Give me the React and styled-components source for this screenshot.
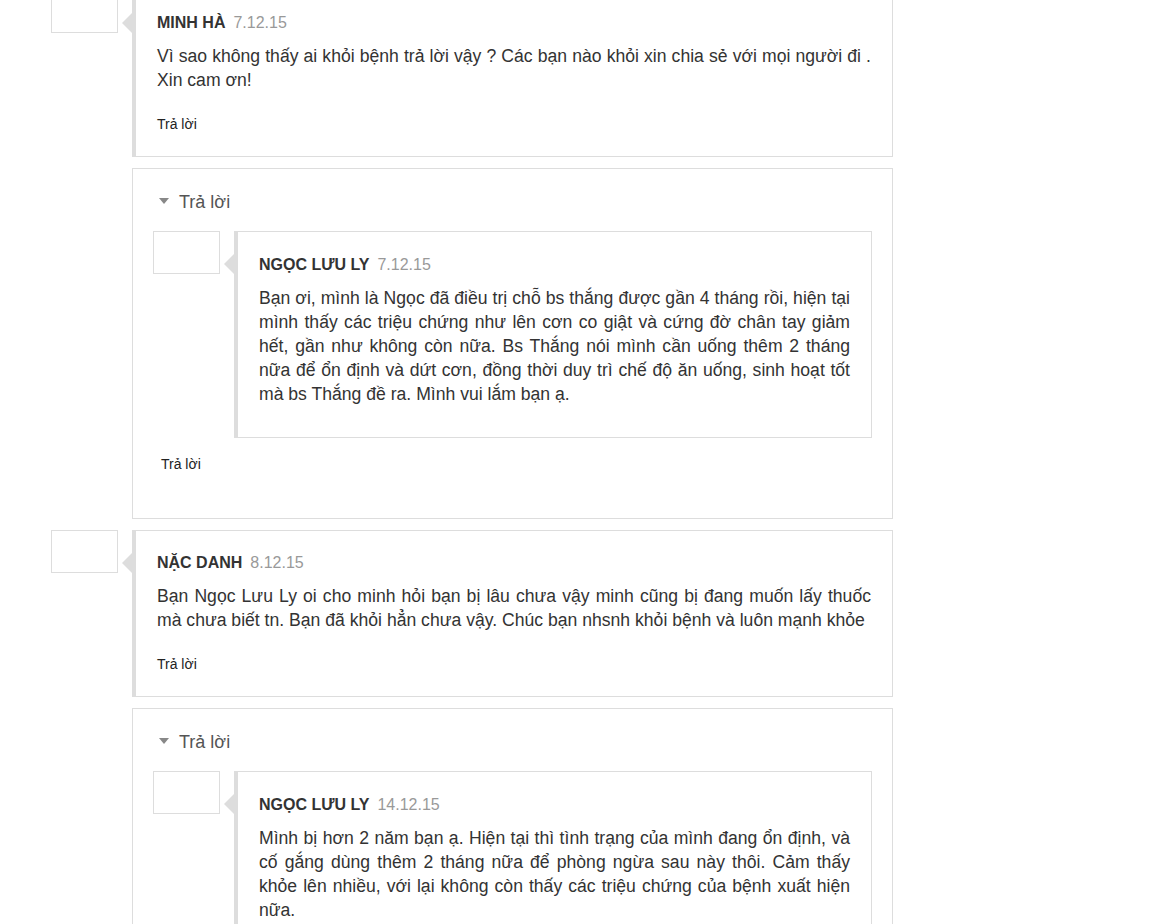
import React from "react";
import styled, { createGlobalStyle } from "styled-components";

const Global = createGlobalStyle`
  html, body { margin: 0; padding: 0; background: #fff; }
  body { font-family: "Liberation Sans", Arial, sans-serif; color: #333; }
`;

const Page = styled.div`
  padding: 0 0 40px 51px;
  margin-top: -10px;
  width: 842px;
`;

const Thread = styled.div`
  display: flex;
  flex-direction: column;
  gap: 11px;
`;

const Row = styled.div`
  display: flex;
  align-items: flex-start;
  gap: 14px;
`;

const Avatar = styled.div`
  flex: 0 0 67px;
  height: 43px;
  box-sizing: border-box;
  border: 1px solid #ddd;
  background: #fff;
`;

const Box = styled.div`
  position: relative;
  flex: 1;
  box-sizing: border-box;
  border: 1px solid #ddd;
  border-left: 4px solid #ddd;
  padding: ${(p) => (p.$nested ? "21px 21px 31px" : "20px 21px 22px")};
  &::before {
    content: "";
    position: absolute;
    left: -14px;
    top: 22px;
    border-style: solid;
    border-width: 10px 10px 10px 0;
    border-color: transparent #ddd transparent transparent;
  }
`;

const Head = styled.div`
  display: flex;
  align-items: baseline;
  gap: 8px;
  height: 24px;
  line-height: 24px;
  margin-bottom: 9px;
`;

const Name = styled.span`
  font-size: 16px;
  font-weight: bold;
  color: #333;
  text-transform: uppercase;
`;

const DateText = styled.span`
  font-size: 16px;
  color: #999;
`;

const Body = styled.p`
  margin: 0;
  font-size: 17.6px;
  line-height: 24px;
  color: #333;
  text-align: justify;
`;

const ReplyLink = styled.a`
  display: block;
  margin-top: ${(p) => p.$mt || "22px"};
  padding-left: ${(p) => p.$indent || "0"};
  font-size: 14px;
  line-height: 20px;
  color: #222;
  text-decoration: none;
  cursor: pointer;
`;

const Replies = styled.div`
  margin-left: 81px;
  box-sizing: border-box;
  border: 1px solid #ddd;
  padding: 21px 20px 44px;
`;

const Toggle = styled.div`
  display: flex;
  align-items: center;
  gap: 10px;
  font-size: 18px;
  line-height: 24px;
  color: #555;
  margin-bottom: 17px;
  padding-left: 6px;
  &::before {
    content: "";
    border-style: solid;
    border-width: 6px 5px 0 5px;
    border-color: #888 transparent transparent transparent;
    margin-top: -3px;
  }
`;

function Comment({ name, date, children, nested, reply = true }) {
  return (
    <Row>
      <Avatar />
      <Box $nested={nested}>
        <Head>
          <Name>{name}</Name>
          <DateText>{date}</DateText>
        </Head>
        <Body>{children}</Body>
        {reply && <ReplyLink>Trả lời</ReplyLink>}
      </Box>
    </Row>
  );
}

function ReplyThread({ children }) {
  return (
    <Replies>
      <Toggle>Trả lời</Toggle>
      {children}
      <ReplyLink $mt="16px" $indent="8px">Trả lời</ReplyLink>
    </Replies>
  );
}

export default function App() {
  return (
    <>
      <Global />
      <Page>
        <Thread>
          <Comment name="Minh Hà" date="7.12.15">
            Vì sao không thấy ai khỏi bệnh trả lời vậy ? Các bạn nào khỏi xin chia sẻ với mọi người đi . Xin cam ơn!
          </Comment>
          <ReplyThread>
            <Comment name="Ngọc Lưu Ly" date="7.12.15" nested reply={false}>
              Bạn ơi, mình là Ngọc đã điều trị chỗ bs thắng được gần 4 tháng rồi, hiện tại mình thấy các triệu chứng như lên cơn co giật và cứng đờ chân tay giảm hết, gần như không còn nữa. Bs Thắng nói mình cần uống thêm 2 tháng nữa để ổn định và dứt cơn, đồng thời duy trì chế độ ăn uống, sinh hoạt tốt mà bs Thắng đề ra. Mình vui lắm bạn ạ.
            </Comment>
          </ReplyThread>
          <Comment name="Nặc danh" date="8.12.15">
            Bạn Ngọc Lưu Ly oi cho minh hỏi bạn bị lâu chưa vậy minh cũng bị đang muốn lấy thuốc mà chưa biết tn. Bạn đã khỏi hẳn chưa vậy. Chúc bạn nhsnh khỏi bệnh và luôn mạnh khỏe
          </Comment>
          <ReplyThread>
            <Comment name="Ngọc Lưu Ly" date="14.12.15" nested reply={false}>
              Mình bị hơn 2 năm bạn ạ. Hiện tại thì tình trạng của mình đang ổn định, và cố gắng dùng thêm 2 tháng nữa để phòng ngừa sau này thôi. Cảm thấy khỏe lên nhiều, với lại không còn thấy các triệu chứng của bệnh xuất hiện nữa.
            </Comment>
          </ReplyThread>
        </Thread>
      </Page>
    </>
  );
}
